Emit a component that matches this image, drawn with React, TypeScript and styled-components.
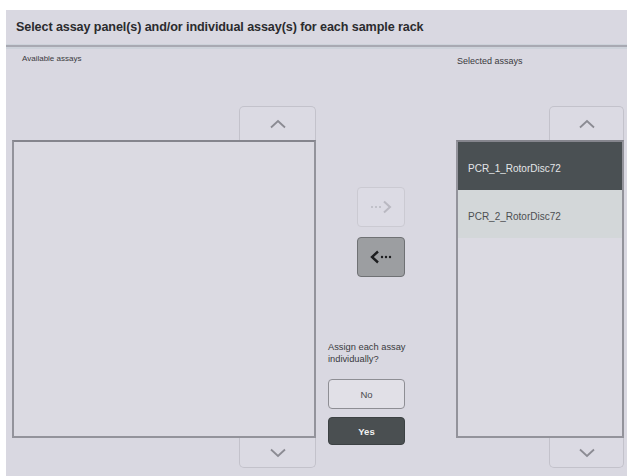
import styled, { createGlobalStyle } from 'styled-components';

const GlobalStyle = createGlobalStyle`
  html, body {
    margin: 0;
    padding: 0;
    background: #ffffff;
  }
  body {
    font-family: "Liberation Sans", Arial, sans-serif;
  }
`;

const Page = styled.div`
  padding: 10px 0 0 6px;
  width: 627px;
  height: 476px;
  box-sizing: border-box;
`;

const Panel = styled.div`
  background: #d9d8e1;
  height: 466px;
  display: flex;
  flex-direction: column;
`;

const Header = styled.div`
  height: 34px;
  display: flex;
  align-items: center;
  padding: 0 0 0 10px;
  font-size: 12.6px;
  font-weight: bold;
  color: #2b2b2e;
  letter-spacing: -0.1px;
`;

const Separator = styled.div`
  height: 5px;
  background: linear-gradient(
    to bottom,
    #cdd2da 0px,
    #cdd2da 1px,
    #a8a9b2 1px,
    #a8a9b2 3px,
    #cdd2da 3px,
    #cdd2da 5px
  );
`;

const Body = styled.div`
  display: grid;
  grid-template-columns: 304px 140px 168px;
  padding-left: 6px;
`;

const Column = styled.div`
  display: flex;
  flex-direction: column;
`;

const ColumnLabel = styled.div<{ $top: number; $left: number; $size: number }>`
  height: 57px;
  box-sizing: border-box;
  padding-top: ${p => p.$top}px;
  padding-left: ${p => p.$left}px;
  font-size: ${p => p.$size}px;
  color: #3a3a3e;
`;

const ScrollButton = styled.div<{ $dir: 'up' | 'down'; $w: number }>`
  align-self: flex-end;
  width: ${p => p.$w}px;
  height: ${p => (p.$dir === 'up' ? 34 : 30)}px;
  box-sizing: border-box;
  border: 1px solid #c3c2cb;
  border-${p => (p.$dir === 'up' ? 'bottom' : 'top')}: none;
  border-radius: ${p => (p.$dir === 'up' ? '5px 5px 0 0' : '0 0 5px 5px')};
  background: #dbdae3;
  display: flex;
  align-items: center;
  justify-content: center;
`;

const ListBox = styled.div`
  height: 298px;
  box-sizing: border-box;
  border: 2px solid #93939b;
  border-top-color: #85858d;
  background: #dbdae2;
  display: flex;
  flex-direction: column;
`;

const ListItem = styled.div<{ $selected?: boolean }>`
  height: 48px;
  display: flex;
  align-items: center;
  padding: 4px 0 0 10px;
  box-sizing: border-box;
  font-size: 10px;
  color: ${p => (p.$selected ? '#e4e6e8' : '#4d4f52')};
  background: ${p => (p.$selected ? '#4a5053' : '#d3d7d9')};
`;

const Middle = styled.div`
  display: flex;
  flex-direction: column;
  padding-top: 138px;
`;

const MoveButton = styled.div<{ $enabled?: boolean }>`
  width: 48px;
  height: 40px;
  margin-left: 41px;
  margin-bottom: 10px;
  box-sizing: border-box;
  border-radius: 4px;
  border: 1px solid ${p => (p.$enabled ? '#6f7174' : '#cbcad2')};
  background: ${p => (p.$enabled ? '#9c9ea1' : '#dcdbe4')};
  display: flex;
  align-items: center;
  justify-content: center;
`;

const AssignLabel = styled.div`
  margin: 54px 0 0 12px;
  width: 92px;
  font-size: 9.3px;
  line-height: 12px;
  color: #3a3a3e;
`;

const ChoiceButton = styled.div<{ $active?: boolean }>`
  width: 77px;
  height: ${p => (p.$active ? 28 : 30)}px;
  margin: ${p => (p.$active ? '8px' : '14px')} 0 0 12px;
  box-sizing: border-box;
  border-radius: 4px;
  border: 1px solid ${p => (p.$active ? '#3c4143' : '#8e8e94')};
  background: ${p => (p.$active ? '#4a4f51' : '#e1e0e7')};
  color: ${p => (p.$active ? '#f2f2f2' : '#4a4a4e')};
  font-size: 9.5px;
  font-weight: ${p => (p.$active ? 'bold' : 'normal')};
  display: flex;
  align-items: center;
  justify-content: center;
`;

const Chevron = ({ dir }: { dir: 'up' | 'down' }) => (
  <svg width="18" height="10" viewBox="0 0 18 10">
    <path
      d={dir === 'up' ? 'M2 8.5 L9 2 L16 8.5' : 'M2 1.5 L9 8 L16 1.5'}
      fill="none"
      stroke="#8b8b93"
      strokeWidth="1.8"
    />
  </svg>
);

const DottedArrow = ({ dir, color }: { dir: 'left' | 'right'; color: string }) => (
  <svg width="24" height="14" viewBox="0 0 24 14">
    {dir === 'right' ? (
      <>
        <circle cx="3" cy="7" r="1" fill={color} />
        <circle cx="7" cy="7" r="1" fill={color} />
        <circle cx="11" cy="7" r="1" fill={color} />
        <path d="M15 1.5 L21 7 L15 12.5" fill="none" stroke={color} strokeWidth="2" />
      </>
    ) : (
      <>
        <path d="M9 1.5 L3 7 L9 12.5" fill="none" stroke={color} strokeWidth="2.4" />
        <circle cx="13" cy="7" r="1.2" fill={color} />
        <circle cx="17" cy="7" r="1.2" fill={color} />
        <circle cx="21" cy="7" r="1.2" fill={color} />
      </>
    )}
  </svg>
);

export default function App() {
  return (
    <>
      <GlobalStyle />
      <Page>
        <Panel>
          <Header>Select assay panel(s) and/or individual assay(s) for each sample rack</Header>
          <Separator />
          <Body>
            <Column>
              <ColumnLabel $top={5} $left={10} $size={8}>Available assays</ColumnLabel>
              <ScrollButton $dir="up" $w={77}>
                <Chevron dir="up" />
              </ScrollButton>
              <ListBox />
              <ScrollButton $dir="down" $w={77}>
                <Chevron dir="down" />
              </ScrollButton>
            </Column>
            <Middle>
              <MoveButton>
                <DottedArrow dir="right" color="#b9b8c1" />
              </MoveButton>
              <MoveButton $enabled>
                <DottedArrow dir="left" color="#1c1d1f" />
              </MoveButton>
              <AssignLabel>Assign each assay individually?</AssignLabel>
              <ChoiceButton>No</ChoiceButton>
              <ChoiceButton $active>Yes</ChoiceButton>
            </Middle>
            <Column>
              <ColumnLabel $top={7} $left={1} $size={9}>Selected assays</ColumnLabel>
              <ScrollButton $dir="up" $w={75}>
                <Chevron dir="up" />
              </ScrollButton>
              <ListBox>
                <ListItem $selected>PCR_1_RotorDisc72</ListItem>
                <ListItem>PCR_2_RotorDisc72</ListItem>
              </ListBox>
              <ScrollButton $dir="down" $w={75}>
                <Chevron dir="down" />
              </ScrollButton>
            </Column>
          </Body>
        </Panel>
      </Page>
    </>
  );
}
